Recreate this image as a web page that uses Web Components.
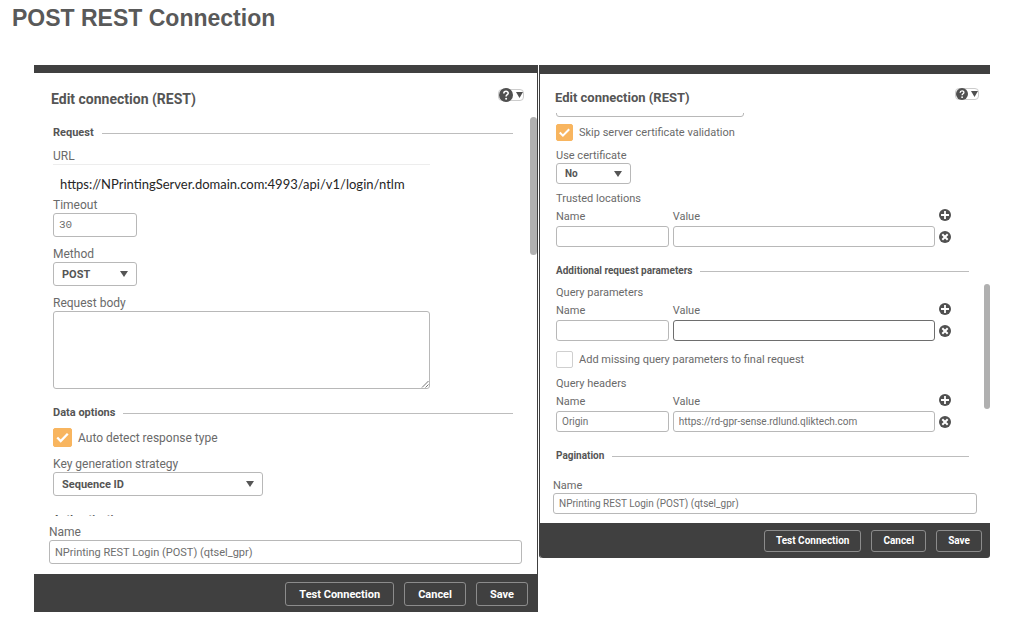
<!DOCTYPE html>
<html lang="en">
<head>
<meta charset="utf-8">
<title>POST REST Connection</title>
<style>
  body { margin: 0; background: #fff; color: #595959; font-family: Roboto, "Liberation Sans", sans-serif; }
</style>
</head>
<body>
<rest-page></rest-page>
<script>
const BASE = `
  *, *::before { box-sizing: border-box; }
  input, select, textarea, button { font: inherit; color: inherit; margin: 0; }
  label { display: block; color: #6a6a6a; font-size: var(--label); line-height: var(--line); white-space: nowrap; }
  .box { display: block; width: 100%; height: var(--control); padding: 0 5px; border: 1px solid #b8b8b8;
         border-radius: 3px; background: #fff; color: #6e6e6e; font-size: var(--small); outline: none; }
`;
const define = (name, css, html) => customElements.define(name, class extends HTMLElement {
  connectedCallback() {
    if (this.shadowRoot) return;
    const get = (k) => this.getAttribute(k) || '';
    this.attachShadow({ mode: 'open' }).innerHTML =
      `<style>${BASE}${css}</style>` + (typeof html === 'function' ? html(get, this) : html);
  }
});

define('section-heading', `
  :host { display: flex; align-items: center; gap: 8px; height: 16px; }
  h3 { margin: 0; font-size: var(--heading); line-height: 16px; font-weight: 700; color: #555; }
  i { flex: 1; height: 1px; background: #bdbdbd; }
`, `<h3><slot></slot></h3><i></i>`);

define('text-field', `
  :host { display: block; }
  :host([mono]) .box { font-family: "Liberation Mono", monospace; }
  :host([plain]) .box { height: 33px; padding: 6px 7px 0; border: 0; border-top: 1px solid #ededed; border-radius: 0;
     font: 13px Lato, sans-serif; color: #262626; }
`, (g) => `${g('label') ? `<label for="f">${g('label')}</label>` : ''}
  <input class="box" id="f" type="text" value="${g('value')}" aria-label="${g('label') || 'URL'}">`);

define('area-field', `
  :host { display: block; }
  .wrap { position: relative; }
  textarea.box { height: 78px; resize: none; }
  svg { position: absolute; right: 1px; bottom: 1px; }
`, (g) => `<label for="f">${g('label')}</label>
  <div class="wrap"><textarea class="box" id="f"></textarea>
  <svg width="8" height="8" viewBox="0 0 8 8" stroke="#777" stroke-width="1"><path d="M1 7.500 7.500 1M4.500 7.500l3-3"/></svg></div>`);

define('select-field', `
  :host { display: block; }
  .wrap { position: relative; }
  select.box { appearance: none; padding: 0 24px 0 8px; font-weight: 700; color: #555; }
  svg { position: absolute; right: 9px; top: 50%; margin-top: -3px; pointer-events: none; }
`, (g) => `<label for="f">${g('label')}</label>
  <div class="wrap"><select class="box" id="f"><option>${g('value')}</option></select>
  <svg width="8" height="6" viewBox="0 0 8 6"><path d="M0 0h8L4 6z" fill="#555"/></svg></div>`);

define('check-field', `
  :host { display: block; }
  label { display: flex; align-items: center; gap: 6px; }
  input { display: block; appearance: none; width: var(--check); height: var(--check); border: 1px solid #cfcfcf; border-radius: 2px; background: #fff; }
  input:checked { border-color: #f8b55f; background: #f8b55f; }
  span { position: relative; display: block; height: var(--check); }
  svg { position: absolute; inset: 0; width: 100%; height: 100%; pointer-events: none; }
`, (g, el) => `<label><span><input type="checkbox" ${el.hasAttribute('checked') ? 'checked' : ''}>
  ${el.hasAttribute('checked') ? '<svg viewBox="0 0 18 18" fill="none" stroke="#fff" stroke-width="2.200"><path d="M4 9l3.300 3.300L14 5.500"/></svg>' : ''}</span>${g('label')}</label>`);

define('pair-field', `
  :host { display: grid; grid-template-columns: 113fr 263fr 12px; column-gap: 4px; row-gap: 2px; align-items: center; padding-right: 18px; }
  button { width: 12px; height: 12px; padding: 0; border: 0; border-radius: 50%; background: #505050; display: block; }
  .add { align-self: start; }
  svg { display: block; width: 12px; height: 12px; }
  :host([active]) #v { border-color: #6e6e6e; }
`, (g) => `<label for="n">Name</label><label for="v">Value</label>
  <button class="add" aria-label="Add"><svg viewBox="0 0 12 12" stroke="#fff" stroke-width="1.800"><path d="M6 2v8M2 6h8"/></svg></button>
  <input class="box" id="n" value="${g('name')}"><input class="box" id="v" value="${g('value')}">
  <button aria-label="Remove"><svg viewBox="0 0 12 12" stroke="#fff" stroke-width="2"><path d="M3.300 3.300l5.400 5.400M8.700 3.300l-5.400 5.400"/></svg></button>`);

define('help-menu', `
  :host { display: block; }
  button { display: flex; align-items: center; gap: 3px; height: 12px; width: 26px; padding: 0; border: 1px solid #ccc; border-radius: 4px; background: #fff; }
  :host([small]) button { width: 24px; }
  .q { flex: none; width: 14px; height: 14px; }
  :host([small]) .q { width: 12px; height: 12px; }
  .a { flex: none; width: 7px; height: 6px; }
`, `<button aria-label="Help"><svg class="q" viewBox="0 0 14 14"><circle cx="7" cy="7" r="7" fill="#505050"/>
  <path d="M4.800 5.500C4.900 2.600 9.300 2.700 9.200 5.200 9.100 6.700 7.100 6.700 7.100 8.500" fill="none" stroke="#fff" stroke-width="1.600"/><circle cx="7.100" cy="10.700" r="1" fill="#fff"/></svg>
  <svg class="a" viewBox="0 0 7 6"><path d="M0 0h7L3.500 6z" fill="#505050"/></svg></button>`);

define('dialog-button', `
  :host { display: block; }
  button { display: block; height: var(--button); padding: 0 var(--button-pad); border: 1px solid #8c8c8c; border-radius: 3px;
    background: transparent; color: #fff; font-size: var(--small); font-weight: 700; white-space: nowrap; }
`, `<button><slot></slot></button>`);

define('connection-dialog', `
  :host { display: flex; flex-direction: column; position: relative; border-top: 8px solid #404040; background: #fff; min-width: 0;
    --label: 12px; --line: 16px; --small: 11px; --heading: 11px; --control: 24px; --check: 19px; --button: 24px; --button-pad: 13px; }
  :host([small]) { border-top-width: 9px; border-radius: 0 0 3px 3px;
    --label: 11px; --line: 15px; --small: 10px; --heading: 10px; --control: 21px; --check: 17px; --button: 22px; --button-pad: 11px; }
  header { display: flex; justify-content: space-between; align-items: center; height: 52px; padding: 0 13px 0 17px; }
  :host([small]) header { height: 39px; padding: 8px 11px 0 15px; }
  h2 { margin: 0; font-size: 14px; line-height: 20px; font-weight: 700; color: #555; }
  :host([small]) h2 { font-size: 13px; }
  help-menu { margin-bottom: 8px; }
  .view { height: 391px; overflow: hidden; padding: 0 24px 0 19px; }
  :host([small]) .view { height: 365px; padding: 0 21px 0 16px; }
  .name { padding: 8px 15px 10px 15px; }
  :host([small]) .name { padding: 0 13px 9px 13px; }
  footer { display: flex; justify-content: flex-end; align-items: center; gap: 10px; height: 38px; padding: 2px 9px 0 0; background: #404040; }
  :host([small]) footer { height: 35px; padding: 0 8px 0 0; border-radius: 0 0 3px 3px; }
  .thumb { position: absolute; right: 0; top: 44px; width: 7px; height: 138px; border-radius: 4px; background: #b0b0b0; }
  :host([small]) .thumb { top: 210px; width: 6px; height: 125px; }
`, (g, el) => `<header><h2>Edit connection (REST)</h2><help-menu ${el.hasAttribute('small') ? 'small' : ''}></help-menu></header>
  <div class="view"><slot></slot></div>
  <div class="name"><text-field label="Name" value="NPrinting REST Login (POST) (qtsel_gpr)"></text-field></div>
  <footer><dialog-button>Test Connection</dialog-button><dialog-button>Cancel</dialog-button><dialog-button>Save</dialog-button></footer>
  <div class="thumb"></div>`);

define('rest-page', `
  :host { display: block; }
  h1 { margin: 0; padding: 4px 12px 33px; font: 700 23px/28px "Liberation Sans", sans-serif; color: #595959; }
  main { display: grid; grid-template-columns: 504fr 451fr; column-gap: 1px; align-items: start; padding: 0 31px 0 34px; }
  .left { border-right: 1px solid #404040; }
  .right { border-left: 1px solid #404040; }
  .form { display: flex; flex-direction: column; gap: 9px; }
  .form > section-heading { margin-top: 7px; margin-bottom: -2px; }
  .form > section-heading:first-child { margin-top: 0; }
  .half { width: 82%; }
  .short { width: 84px; }
  .medium { width: 210px; }
  .flush { margin-bottom: -9px; }
  .sub { font-size: 11px; line-height: 15px; color: #6a6a6a; }
  .right .form { gap: 7px; margin-top: -17px; }
  .right .cut { width: 188px; }
  .right .group { display: flex; flex-direction: column; gap: 3px; }
  .right .group + check-field { margin-top: 3px; }
  .right check-field + .group { margin-top: 1px; }
  .right .select { width: 75px; }
  .right .form > section-heading { margin-top: 9px; margin-bottom: -1px; }
`, `<h1>POST REST Connection</h1>
<main>
  <connection-dialog class="left"><div class="form">
    <section-heading>Request</section-heading>
    <text-field class="half flush" plain label="URL" value="https://NPrintingServer.domain.com:4993/api/v1/login/ntlm"></text-field>
    <text-field class="short" mono label="Timeout" value="30"></text-field>
    <select-field class="short" label="Method" value="POST"></select-field>
    <area-field class="half" label="Request body"></area-field>
    <section-heading>Data options</section-heading>
    <check-field checked label="Auto detect response type"></check-field>
    <select-field class="medium" label="Key generation strategy" value="Sequence ID"></select-field>
    <section-heading>Authentication</section-heading>
  </div></connection-dialog>
  <connection-dialog class="right" small><div class="form">
    <text-field class="cut"></text-field>
    <check-field checked label="Skip server certificate validation"></check-field>
    <select-field class="select" label="Use certificate" value="No"></select-field>
    <div class="group"><div class="sub">Trusted locations</div><pair-field></pair-field></div>
    <section-heading>Additional request parameters</section-heading>
    <div class="group"><div class="sub">Query parameters</div><pair-field active></pair-field></div>
    <check-field label="Add missing query parameters to final request"></check-field>
    <div class="group"><div class="sub">Query headers</div><pair-field name="Origin" value="https://rd-gpr-sense.rdlund.qliktech.com"></pair-field></div>
    <section-heading>Pagination</section-heading>
  </div></connection-dialog>
</main>`);
</script>
</body>
</html>
